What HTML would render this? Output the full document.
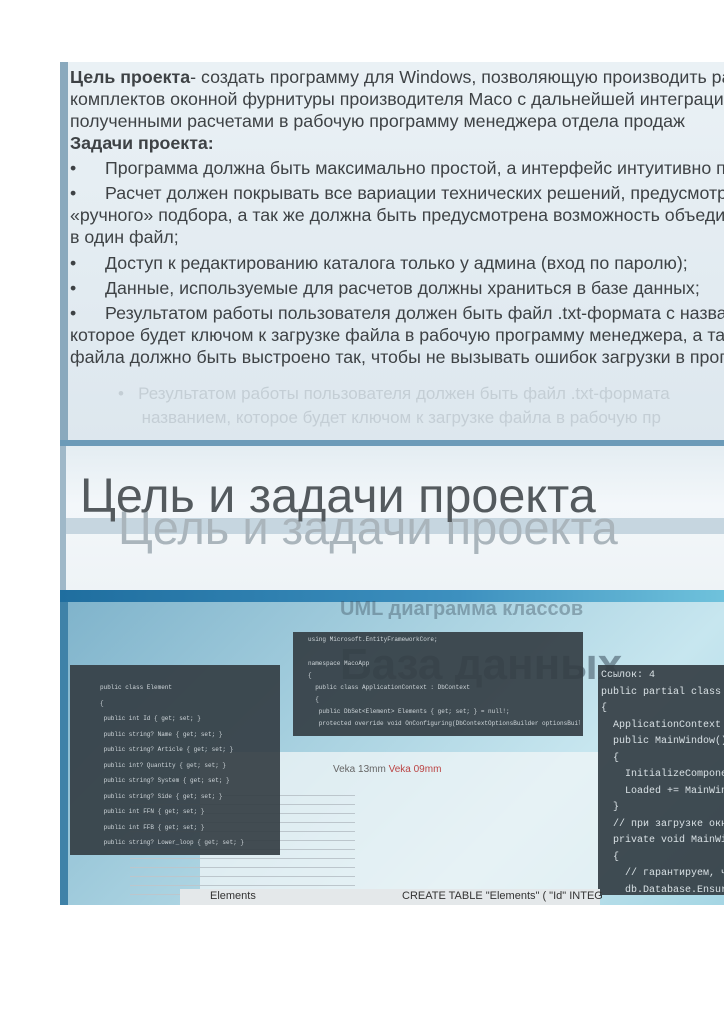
<!DOCTYPE html>
<html><head><meta charset="utf-8"><style>
*{margin:0;padding:0;box-sizing:border-box}
html,body{width:724px;height:1024px;overflow:hidden}
body{background:#fff;position:relative;font-family:"Liberation Sans","DejaVu Sans",sans-serif}
.a{position:absolute}
.txt{left:70px;width:654px;overflow:hidden;font-size:17.8px;color:#3e4245;white-space:nowrap;line-height:22px}
.code{font-family:"Liberation Mono",monospace;color:#cfd6da;white-space:nowrap;overflow:hidden}
.panel{background:rgba(52,62,68,.92)}
.b{display:inline-block;width:35px}
</style></head><body>
<div class="a" style="left:60px;top:62px;width:664px;height:380px;background:linear-gradient(180deg,#eaf1f5,#e2ebf1 60%,#dde7ee)"></div>
<div class="a" style="left:60px;top:62px;width:8px;height:380px;background:#8aa9bd"></div>

<div class="a" style="left:118px;top:382px;width:606px;overflow:hidden;font-size:17px;color:#c4ced5;white-space:nowrap;line-height:24px">•&nbsp;&nbsp;&nbsp;Результатом работы пользователя должен быть файл .txt-формата<br>&nbsp;&nbsp;&nbsp;&nbsp;&nbsp;названием, которое будет ключом к загрузке файла в рабочую пр</div>

<div class="a" style="left:60px;top:440px;width:664px;height:6px;background:#6c9bb8"></div>
<div class="a" style="left:60px;top:446px;width:664px;height:146px;background:linear-gradient(180deg,#e4edf2,#f3f7fa 40%,#eef3f6)"></div>
<div class="a" style="left:60px;top:446px;width:6px;height:146px;background:#9fb8c8"></div>
<div class="a" style="left:66px;top:518px;width:658px;height:16px;background:#c6d6e0"></div>
<div class="a" style="left:60px;top:590px;width:664px;height:12px;background:linear-gradient(90deg,#1f6e9f,#3d90bf 60%,#6fc2dc)"></div>
<div class="a" style="left:60px;top:602px;width:664px;height:303px;background:linear-gradient(135deg,#7fb3cb,#a8d1e0 40%,#c7e6ef 70%,#a5d6e4)"></div>
<div class="a" style="left:60px;top:602px;width:8px;height:303px;background:#3f82a8"></div>

<div class="a txt" style="top:66px"><b>Цель проекта</b>- создать программу для Windows, позволяющую производить расчет</div>
<div class="a txt" style="top:88px">комплектов оконной фурнитуры производителя Масо с дальнейшей интеграцией</div>
<div class="a txt" style="top:110px">полученными расчетами в рабочую программу менеджера отдела продаж</div>
<div class="a txt" style="top:132px"><b>Задачи проекта:</b></div>
<div class="a txt" style="top:157px"><span class="b">•</span>Программа должна быть максимально простой, а интерфейс интуитивно понятным;</div>
<div class="a txt" style="top:182px"><span class="b">•</span>Расчет должен покрывать все вариации технических решений, предусмотренных</div>
<div class="a txt" style="top:204px">«ручного» подбора, а так же должна быть предусмотрена возможность объединения</div>
<div class="a txt" style="top:226px">в один файл;</div>
<div class="a txt" style="top:252px"><span class="b">•</span>Доступ к редактированию каталога только у админа (вход по паролю);</div>
<div class="a txt" style="top:277px"><span class="b">•</span>Данные, используемые для расчетов должны храниться в базе данных;</div>
<div class="a txt" style="top:302px"><span class="b">•</span>Результатом работы пользователя должен быть файл .txt-формата с названием,</div>
<div class="a txt" style="top:324px">которое будет ключом к загрузке файла в рабочую программу менеджера, а так же</div>
<div class="a txt" style="top:346px">файла должно быть выстроено так, чтобы не вызывать ошибок загрузки в программе</div>

<div class="a" style="left:118px;top:500px;font-size:47px;color:#aab5bc;white-space:nowrap">Цель и задачи проекта</div>
<div class="a" style="left:80px;top:468px;font-size:48.5px;color:#545a5e;white-space:nowrap">Цель и задачи проекта</div>

<div class="a" style="left:340px;top:640px;font-size:44px;font-weight:bold;color:rgba(60,80,95,.55);white-space:nowrap">База данных</div>
<div class="a" style="left:340px;top:598px;font-size:20px;font-weight:bold;color:rgba(60,80,95,.4);white-space:nowrap">UML диаграмма классов</div>

<div class="a" style="left:200px;top:752px;width:400px;height:140px;background:rgba(240,245,247,.75)"></div>
<div class="a" style="left:333px;top:764px;font-size:10px;color:#b44"><span style="color:#666">Veka 13mm</span> Veka 09mm</div>
<div class="a" style="left:130px;top:795px;width:225px;height:100px;background:repeating-linear-gradient(180deg,#bcc6cc 0 1px,transparent 1px 9px)"></div>

<div class="a panel" style="left:70px;top:665px;width:210px;height:190px"></div>
<div class="a code" style="left:100px;top:680px;width:178px;height:172px;font-size:6px;line-height:15.5px">public class Element<br>{<br>&nbsp;public int Id { get; set; }<br>&nbsp;public string? Name { get; set; }<br>&nbsp;public string? Article { get; set; }<br>&nbsp;public int? Quantity { get; set; }<br>&nbsp;public string? System { get; set; }<br>&nbsp;public string? Side { get; set; }<br>&nbsp;public int FFN { get; set; }<br>&nbsp;public int FFB { get; set; }<br>&nbsp;public string? Lower_loop { get; set; }</div>
<div class="a panel" style="left:293px;top:632px;width:290px;height:104px"></div>
<div class="a code" style="left:308px;top:634px;width:272px;font-size:6px;line-height:12px">using Microsoft.EntityFrameworkCore;<br><br>namespace MacoApp<br>{<br>&nbsp;&nbsp;public class ApplicationContext : DbContext<br>&nbsp;&nbsp;{<br>&nbsp;&nbsp;&nbsp;public DbSet&lt;Element&gt; Elements { get; set; } = null!;<br>&nbsp;&nbsp;&nbsp;protected override void OnConfiguring(DbContextOptionsBuilder optionsBuilder)</div>
<div class="a panel" style="left:598px;top:665px;width:126px;height:230px"></div>
<div class="a code" style="left:601px;top:668px;width:123px;height:225px;font-size:10px;line-height:16.5px;color:#d8e0e4">Ссылок: 4<br>public partial class MainW<br>{<br>&nbsp;&nbsp;ApplicationContext db<br>&nbsp;&nbsp;public MainWindow()<br>&nbsp;&nbsp;{<br>&nbsp;&nbsp;&nbsp;&nbsp;InitializeComponen<br>&nbsp;&nbsp;&nbsp;&nbsp;Loaded += MainWind<br>&nbsp;&nbsp;}<br>&nbsp;&nbsp;// при загрузке окна<br>&nbsp;&nbsp;private void MainWindo<br>&nbsp;&nbsp;{<br>&nbsp;&nbsp;&nbsp;&nbsp;// гарантируем, чт<br>&nbsp;&nbsp;&nbsp;&nbsp;db.Database.Ensure</div>

<div class="a" style="left:180px;top:889px;width:420px;height:16px;background:#e4e8ea"></div>
<div class="a" style="left:210px;top:890px;font-size:11px;color:#333">Elements</div>
<div class="a" style="left:402px;top:890px;font-size:11px;color:#333;white-space:nowrap">CREATE TABLE "Elements" ( "Id" INTEG</div>
<div class="a" style="left:60px;top:905px;width:664px;height:119px;background:#fff"></div>
</body></html>
